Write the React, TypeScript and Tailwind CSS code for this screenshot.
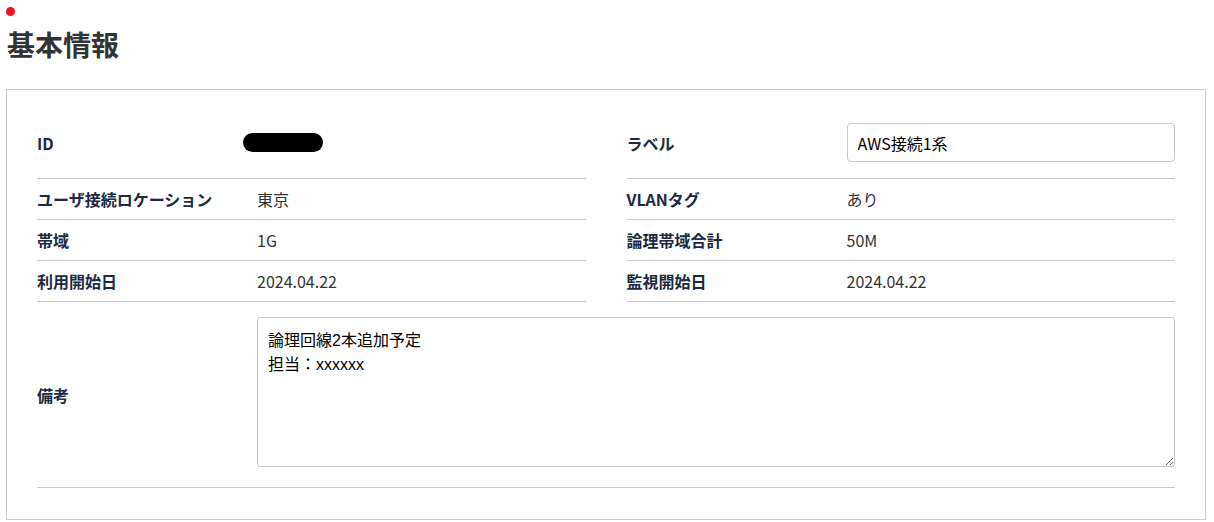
import React from "react";

const jp = { fontFamily: '"Noto Sans CJK JP", "Noto Sans", sans-serif' };

function Row({ label, value }: { label: string; value: React.ReactNode }) {
  return (
    <div className="flex h-[41px] items-center border-b border-[#c8c8c8]">
      <div className="w-[220px] shrink-0 text-[16px] font-bold text-[#1b2a42]">{label}</div>
      <div className="text-[16px] text-[#333]">{value}</div>
    </div>
  );
}

export default function App() {
  return (
    <div className="bg-white min-h-[522px] w-[1214px]" style={jp}>
      <div className="pl-[6px] pt-[7px]">
        <div className="h-[9px] w-[9px] rounded-full bg-[#e8141e]" />
      </div>
      <h1 className="pl-[7px] mt-[8px] text-[28px] font-bold leading-[40px] text-[#333]">基本情報</h1>
      <div className="ml-[6px] mr-[8px] mt-[25px] border border-[#cccccc] px-[30px] pt-[33px] pb-[31px]">
        <div className="grid grid-cols-2 gap-x-[41px]">
          <div>
            <div className="flex h-[56px] items-start border-b border-[#c8c8c8]">
              <div className="flex h-[39px] items-center">
                <div className="w-[206px] shrink-0 text-[16px] font-bold text-[#1b2a42]">ID</div>
                <div className="h-[19px] w-[80px] rounded-full bg-black" />
              </div>
            </div>
            <Row label="ユーザ接続ロケーション" value="東京" />
            <Row label="帯域" value="1G" />
            <Row label="利用開始日" value="2024.04.22" />
          </div>
          <div>
            <div className="flex h-[56px] items-start border-b border-[#c8c8c8]">
              <div className="flex h-[39px] w-full items-center">
                <div className="w-[220px] shrink-0 text-[16px] font-bold text-[#1b2a42]">ラベル</div>
                <input
                  readOnly
                  value="AWS接続1系"
                  className="h-[39px] min-w-0 flex-1 rounded-[4px] border border-[#c8c8c8] px-[10px] text-[16px] text-black outline-none"
                  style={jp}
                />
              </div>
            </div>
            <Row label="VLANタグ" value="あり" />
            <Row label="論理帯域合計" value="50M" />
            <Row label="監視開始日" value="2024.04.22" />
          </div>
        </div>
        <div className="flex items-center border-b border-[#c8c8c8] pt-[15px] pb-[20px]">
          <div className="w-[220px] shrink-0 pt-[6px] text-[16px] font-bold text-[#1b2a42]">備考</div>
          <textarea
            readOnly
            className="h-[150px] flex-1 rounded-[3px] border border-[#c8c8c8] px-[10px] py-[11px] text-[16px] leading-[24px] text-black outline-none"
            style={{ fontFamily: '"Liberation Sans", "Noto Sans CJK JP", sans-serif' }}
            value={"論理回線2本追加予定\n担当：xxxxxx"}
          />
        </div>
      </div>
    </div>
  );
}
